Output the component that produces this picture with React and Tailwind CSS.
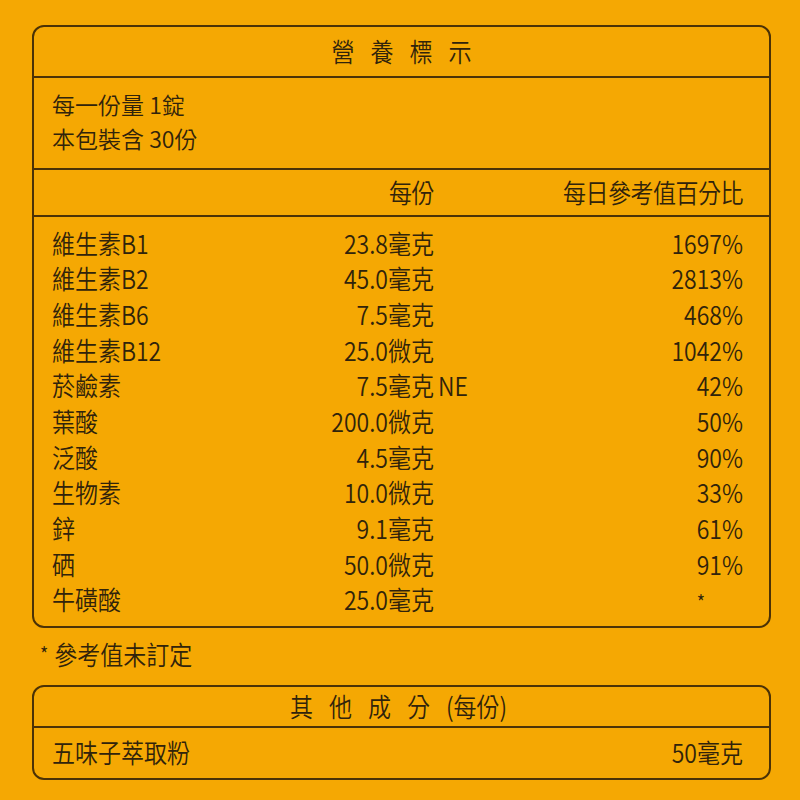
import React from "react";

const rows = [
  ["維生素B1", "23.8毫克", "", "1697%"],
  ["維生素B2", "45.0毫克", "", "2813%"],
  ["維生素B6", "7.5毫克", "", "468%"],
  ["維生素B12", "25.0微克", "", "1042%"],
  ["菸鹼素", "7.5毫克", "NE", "42%"],
  ["葉酸", "200.0微克", "", "50%"],
  ["泛酸", "4.5毫克", "", "90%"],
  ["生物素", "10.0微克", "", "33%"],
  ["鋅", "9.1毫克", "", "61%"],
  ["硒", "50.0微克", "", "91%"],
  ["牛磺酸", "25.0毫克", "", "*"],
];

function T({ children, className = "" }) {
  return (
    <span className={"inline-block leading-none scale-y-[1.13] " + className}>{children}</span>
  );
}

export default function App() {
  return (
    <div
      className="w-[800px] h-[800px] bg-[#f5a803] pt-[25px] pl-[32px] pr-[29px] text-[#30230b] text-[23px] font-[350]"
      style={{ fontFamily: '"Noto Sans CJK TC", "Noto Sans", sans-serif' }}
    >
      <div className="border-2 border-[#4b3206] rounded-[12px]">
        <div className="h-[51px] border-b-2 border-[#4b3206] flex items-center justify-center">
          <T className="tracking-[16px] pl-[16px]">營養標示</T>
        </div>
        <div className="border-b-2 border-[#4b3206] pt-[9px] pb-[13px] pl-[18px]">
          <div className="h-[34px] flex items-center">
            <span className="leading-none">每一份量 1錠</span>
          </div>
          <div className="h-[34px] flex items-center">
            <span className="leading-none">本包裝含 30份</span>
          </div>
        </div>
        <div className="h-[47px] border-b-2 border-[#4b3206] grid grid-cols-[200px_182px_1fr_auto] items-center pl-[18px] pr-[26px]">
          <div></div>
          <div className="text-right">
            <T className="tracking-[-0.5px]">每份</T>
          </div>
          <div></div>
          <div className="text-right">
            <T className="tracking-[-0.5px]">每日參考值百分比</T>
          </div>
        </div>
        <div className="pt-[8px] pb-[8px] pl-[18px] pr-[26px]">
          {rows.map((r) => (
            <div
              key={r[0]}
              className="grid grid-cols-[200px_182px_1fr_auto] h-[35.7px] items-center"
            >
              <div>
                <T>{r[0]}</T>
              </div>
              <div className="text-right">
                <T>{r[1]}</T>
              </div>
              <div className="pl-[4px]">
                <T>{r[2]}</T>
              </div>
              <div className="text-right">
                {r[3] === "*" ? (
                  <T className="mr-[38px] text-[18px]">*</T>
                ) : (
                  <T>{r[3]}</T>
                )}
              </div>
            </div>
          ))}
        </div>
      </div>
      <div className="mt-[12px] ml-[8px] h-[30px] flex items-center">
        <T className="text-[18px] mr-[6px] relative top-[-2px]">*</T>
        <T>參考值未訂定</T>
      </div>
      <div className="mt-[15px] border-2 border-[#4b3206] rounded-[12px]">
        <div className="h-[41px] border-b-2 border-[#4b3206] flex items-center justify-center">
          <T className="tracking-[16px]">其他成分</T>
          <T className="mr-[6px]">(每份)</T>
        </div>
        <div className="h-[50px] flex items-center justify-between pl-[18px] pr-[26px]">
          <T>五味子萃取粉</T>
          <T>50毫克</T>
        </div>
      </div>
    </div>
  );
}
